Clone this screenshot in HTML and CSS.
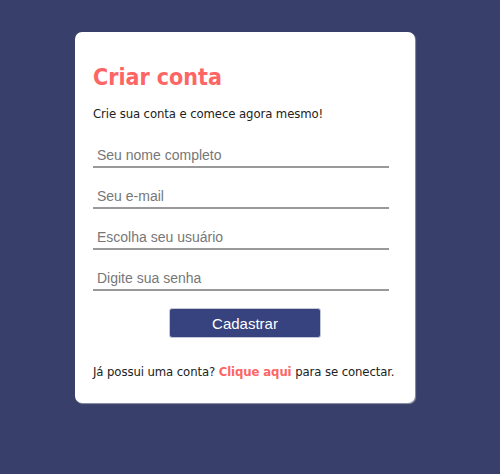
FILE: index.html
```html
<!DOCTYPE html>
<html lang="pt-BR">
<head>
<meta charset="utf-8">
<title>Criar conta</title>
<link rel="stylesheet" href="styles.css">
</head>
<body>
<main class="page">
  <section class="card">
    <h1 class="title">Criar conta</h1>
    <p class="subtitle">Crie sua conta e comece agora mesmo!</p>
    <form class="form">
      <input class="field" type="text" placeholder="Seu nome completo">
      <input class="field" type="email" placeholder="Seu e-mail">
      <input class="field" type="text" placeholder="Escolha seu usuário">
      <input class="field" type="password" placeholder="Digite sua senha">
      <button class="btn" type="button">Cadastrar</button>
    </form>
    <p class="footer">Já possui uma conta? <a class="link" href="#">Clique aqui</a> para se conectar.</p>
  </section>
</main>
</body>
</html>
```
FILE: styles.css
```css
html, body {
  margin: 0;
  padding: 0;
  height: 100%;
}
body {
  background: #373f6a;
  font-family: "DejaVu Sans Condensed", "DejaVu Sans", Verdana, sans-serif;
}
.page {
  padding: 32px 0 0 75px;
}
.card {
  box-sizing: border-box;
  width: 340px;
  height: 371px;
  background: #fff;
  border-radius: 7px;
  box-shadow: 1px 1px 1px 0 #8f92a6;
  padding: 30px 18px 0 18px;
}
.title {
  margin: 0;
  font-family: "DejaVu Sans Condensed", "DejaVu Sans", sans-serif;
  font-weight: bold;
  font-size: 23px;
  line-height: 30px;
  color: #fe6565;
}
.subtitle {
  margin: 14px 0 0 0;
  font-size: 13px;
  line-height: 16px;
  color: #222;
  letter-spacing: -0.1px;
}
.form {
  display: flex;
  flex-direction: column;
  align-items: flex-start;
  margin-top: 14px;
}
.field {
  box-sizing: border-box;
  width: 296px;
  height: 32px;
  margin: 0 0 9px 0;
  padding: 7px 4px 0 4px;
  border: none;
  border-bottom: 2px solid #999;
  outline: none;
  font-family: "Liberation Sans", Arial, sans-serif;
  font-size: 14px;
  color: #333;
  background: transparent;
}
.field::placeholder {
  color: #777;
}
.btn {
  align-self: center;
  margin-top: 8px;
  width: 152px;
  height: 30px;
  background: #36437f;
  color: #fff;
  border: 1px solid #c5c8d6;
  border-radius: 3px;
  font-family: "Liberation Sans", Arial, sans-serif;
  font-size: 15px;
  cursor: pointer;
}
.footer {
  margin: 26px 0 0 0;
  font-size: 13px;
  line-height: 16px;
  color: #222;
  white-space: nowrap;
  letter-spacing: -0.1px;
}
.link {
  color: #fe6565;
  font-weight: bold;
  text-decoration: none;
}
```
